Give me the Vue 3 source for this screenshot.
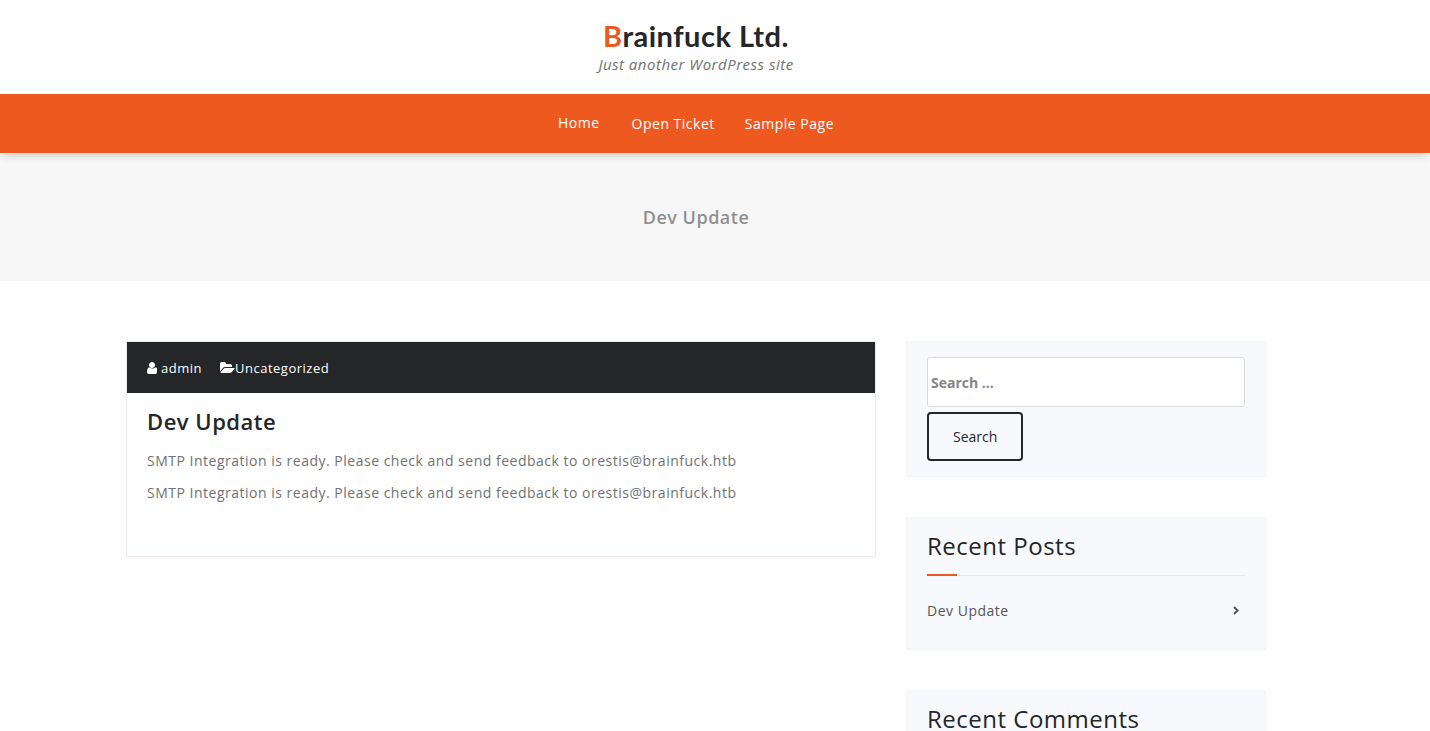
<script setup>
const menu = ['Home', 'Open Ticket', 'Sample Page']
const paragraphs = [
  'SMTP Integration is ready. Please check and send feedback to orestis@brainfuck.htb',
  'SMTP Integration is ready. Please check and send feedback to orestis@brainfuck.htb',
]
</script>

<template>
  <div class="site">
    <header class="brand">
      <h1 class="brand-name"><a href="#"><span class="initial">B</span>rainfuck Ltd.</a></h1>
      <p class="tagline">Just another WordPress site</p>
    </header>

    <nav class="menu">
      <a v-for="(item, i) in menu" :key="item" href="#" :class="{ active: i === 0 }">{{ item }}</a>
    </nav>

    <section class="banner">
      <h2>Dev Update</h2>
    </section>

    <div class="page">
      <div class="container">
        <main>
          <article class="post">
            <div class="meta">
              <a href="#" class="author">
                <svg width="10" height="12" viewBox="0 0 1280 1536" aria-hidden="true">
                  <path fill="currentColor" d="M1280 1271q0 120-73 189.500t-194 69.500h-746q-121 0-194-69.500t-73-189.500q0-53 3.500-103.500t14-109 26.500-108.500 43-97.500 62-81 85.500-53.500 111.500-20q9 0 42 21.500t74.500 48 108 48 133.500 21.500 133.500-21.500 108-48 74.500-48 42-21.500q61 0 111.500 20t85.500 53.500 62 81 43 97.500 26.500 108.500 14 109 3.500 103.500zm-256-887q0 159-112.500 271.500t-271.500 112.500-271.500-112.500-112.500-271.500 112.500-271.500 271.500-112.500 271.500 112.500 112.500 271.500z" />
                </svg>
                <span>admin</span>
              </a>
              <a href="#" class="category">
                <svg width="15" height="14" viewBox="0 0 1920 1792" aria-hidden="true">
                  <path fill="currentColor" d="M1879 952q0 31-31 66l-336 396q-43 51-120.500 86.500t-143.500 35.500h-1088q-34 0-60.500-13t-26.500-43q0-31 31-66l336-396q43-51 120.500-86.500t143.500-35.500h1088q34 0 60.500 13t26.500 43zm-343-344v160h-832q-94 0-197 47.500t-164 119.500l-337 396-5 6q0-4-.5-12.500t-.5-12.500v-960q0-92 66-158t158-66h320q92 0 158 66t66 158v32h544q92 0 158 66t66 158z" />
                </svg>
                <span>Uncategorized</span>
              </a>
            </div>
            <div class="body">
              <h3>Dev Update</h3>
              <p v-for="(text, i) in paragraphs" :key="i">{{ text }}</p>
            </div>
          </article>
        </main>

        <aside class="sidebar">
          <form class="widget search" role="search" @submit.prevent>
            <input type="search" placeholder="Search ..." aria-label="Search for" />
            <button type="submit">Search</button>
          </form>
          <section class="widget">
            <h2>Recent Posts</h2>
            <ul>
              <li>
                <a href="#">Dev Update</a>
                <svg width="6" height="10" viewBox="0 0 6 10" aria-hidden="true">
                  <path fill="none" stroke="currentColor" stroke-width="2" d="M1 1L4.500 4.500L1 8" />
                </svg>
              </li>
            </ul>
          </section>
          <section class="widget">
            <h2>Recent Comments</h2>
          </section>
        </aside>
      </div>
    </div>
  </div>
</template>

<style>
html {
  scrollbar-width: none;
}
body {
  margin: 0;
  background: #fefefe;
}
</style>

<style scoped>
* {
  box-sizing: border-box;
}
.site {
  --gutter: 38px;
  color: #727272;
  font-family: "Open Sans", "Noto Sans", sans-serif;
  font-size: 14px;
  line-height: 22px;
  letter-spacing: 0.036em;
}
h1, h2, h3, p, ul {
  margin: 0;
  padding: 0;
  list-style: none;
}
a {
  color: inherit;
  text-decoration: none;
}
.brand {
  padding: 20px var(--gutter) 19px 0;
  text-align: center;
}
.brand-name {
  color: #242628;
  font-family: Lato, sans-serif;
  font-size: 29px;
  font-weight: 700;
  line-height: 32px;
}
.initial {
  color: #ee591f;
}
.tagline {
  padding-top: 1px;
  font-size: 15px;
  font-style: italic;
}
.menu {
  position: relative;
  display: flex;
  justify-content: center;
  align-items: center;
  padding: 18px var(--gutter) 17px 0;
  background: #ee591f;
  box-shadow: 0 6px 8px -3px rgba(0, 0, 0, 0.16);
  color: #fff;
  line-height: 24px;
}
.menu a {
  padding: 0 15px;
}
.menu .active {
  border: solid transparent;
  border-width: 0 2px 2px 0;
  line-height: 22px;
}
.banner {
  padding: 52px var(--gutter) 52px 0;
  background: #f7f7f7;
  text-align: center;
}
.banner h2 {
  color: #909090;
  font-size: 18px;
  font-weight: 600;
  line-height: 24px;
}
.page {
  padding: 60px var(--gutter) 0 0;
}
.container {
  display: grid;
  grid-template-columns: 25fr 12fr;
  gap: 30px;
  max-width: 1170px;
  margin: 0 auto;
  padding: 0 15px;
}
.post {
  border: 1px solid #eee8e9;
}
.meta {
  display: flex;
  gap: 18px;
  padding: 15px 20px 14px;
  background: #242628;
  color: #fff;
  font-size: 13px;
}
.meta a {
  display: flex;
  align-items: center;
}
.author {
  gap: 4px;
}
.body {
  padding: 14px 20px 42px;
}
.body h3 {
  margin-bottom: 15px;
  color: #242628;
  font-size: 22px;
  font-weight: 600;
  line-height: 28px;
}
.body p {
  margin-bottom: 10px;
}
.sidebar {
  display: flex;
  flex-direction: column;
  gap: 40px;
}
.widget {
  padding: 14px 20px 15px;
  border: 1px solid #f4f5f7;
  background: #f8f9fd;
}
.search {
  display: flex;
  flex-direction: column;
  align-items: flex-start;
  gap: 5px;
  padding-top: 15px;
}
.search input {
  width: 100%;
  height: 50px;
  padding: 2px 3px;
  border: 1px solid #dadada;
  border-radius: 3px;
  outline: 0;
  background: #fff;
  color: #727272;
  font: 700 14px "Open Sans", sans-serif;
  appearance: none;
}
.search input::placeholder {
  color: #858585;
  opacity: 1;
}
.search button {
  padding: 13px 24px 12px;
  border: 2px solid #242628;
  border-radius: 4px;
  background: transparent;
  color: #242628;
  font: 14px/20px "Open Sans", sans-serif;
}
.widget h2 {
  position: relative;
  padding-bottom: 15px;
  border-bottom: 1px solid #e6e7ea;
  color: #242628;
  font-size: 24px;
  font-weight: 400;
  line-height: 28px;
}
.widget h2::after {
  content: "";
  position: absolute;
  bottom: -1px;
  left: 0;
  width: 30px;
  height: 2px;
  background: #ee591f;
}
.widget li {
  display: flex;
  justify-content: space-between;
  align-items: center;
  padding: 24px 6px 12px 0;
  color: #555;
}
</style>
